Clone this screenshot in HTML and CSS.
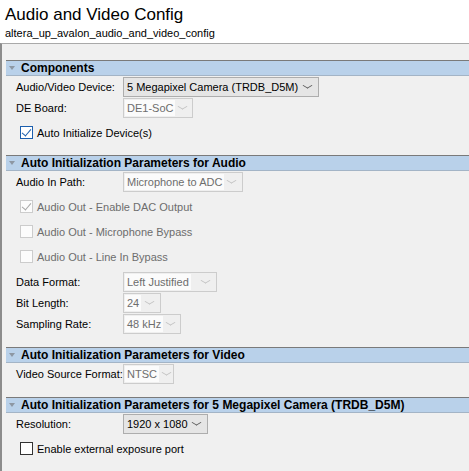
FILE: index.html
```html
<!DOCTYPE html>
<html lang="en">
<head>
  <meta charset="UTF-8">
  <title>Audio and Video Config</title>
  <link rel="stylesheet" href="styles.css">
</head>
<body>

<header class="top">
  <div class="title">Audio and Video Config</div>
  <div class="subtitle">altera_up_avalon_audio_and_video_config</div>
</header>

<main class="panel">

  <section class="group">
    <div class="group-head"><span class="tri"></span>Components</div>
    <div class="row">
      <label class="lbl">Audio/Video Device:</label>
      <div class="combo w-device"><span class="val">5 Megapixel Camera (TRDB_D5M)</span><span class="chev"></span></div>
    </div>
    <div class="row">
      <label class="lbl">DE Board:</label>
      <div class="combo off w-board"><span class="val">DE1-SoC</span><span class="chev"></span></div>
    </div>
    <div class="check-row">
      <span class="box checked focus"></span>Auto Initialize Device(s)
    </div>
  </section>

  <section class="group">
    <div class="group-head"><span class="tri"></span>Auto Initialization Parameters for Audio</div>
    <div class="row">
      <label class="lbl">Audio In Path:</label>
      <div class="combo off w-path"><span class="val">Microphone to ADC</span><span class="chev"></span></div>
    </div>
    <div class="check-row off">
      <span class="box checked"></span>Audio Out - Enable DAC Output
    </div>
    <div class="check-row off">
      <span class="box"></span>Audio Out - Microphone Bypass
    </div>
    <div class="check-row off">
      <span class="box"></span>Audio Out - Line In Bypass
    </div>
    <div class="row first">
      <label class="lbl">Data Format:</label>
      <div class="combo off w-format"><span class="val">Left Justified</span><span class="chev"></span></div>
    </div>
    <div class="row">
      <label class="lbl">Bit Length:</label>
      <div class="combo off w-bits"><span class="val">24</span><span class="chev"></span></div>
    </div>
    <div class="row">
      <label class="lbl">Sampling Rate:</label>
      <div class="combo off w-rate"><span class="val">48 kHz</span><span class="chev"></span></div>
    </div>
  </section>

  <section class="group">
    <div class="group-head"><span class="tri"></span>Auto Initialization Parameters for Video</div>
    <div class="row">
      <label class="lbl">Video Source Format:</label>
      <div class="combo off w-ntsc"><span class="val">NTSC</span><span class="chev"></span></div>
    </div>
  </section>

  <section class="group">
    <div class="group-head"><span class="tri"></span>Auto Initialization Parameters for 5 Megapixel Camera (TRDB_D5M)</div>
    <div class="row">
      <label class="lbl">Resolution:</label>
      <div class="combo w-res"><span class="val">1920 x 1080</span><span class="chev"></span></div>
    </div>
    <div class="check-row">
      <span class="box"></span>Enable external exposure port
    </div>
  </section>

</main>

</body>
</html>
```

FILE: styles.css
```css
:root {
  --panel-bg: #f0f0f0;
  --head-bg: #b9d1ea;
  --head-line: #7a7a7a;
  --text-main: #000;
  --text-off: #6d6d6d;
}

html, body {
  margin: 0;
  height: 100%;
}

body {
  font-family: 'Liberation Sans', Arial, sans-serif;
  font-size: 11px;
  color: var(--text-main);
  background-color: #fff;
  display: flex;
  flex-direction: column;
  overflow: hidden;
}

.top {
  height: 45px;
  box-sizing: border-box;
  padding: 4px 0 0 5px;
}

.title {
  font-size: 17px;
  line-height: 22px;
}

.subtitle {
  font-size: 11px;
  line-height: 14px;
}

.panel {
  flex: 1;
  background-color: var(--panel-bg);
  border-top: 1px solid #a9a9a9;
  border-left: 2px solid #8c8c8c;
  padding-top: 16px;
}

.group {
  padding-bottom: 13px;
}

.group-head {
  margin-left: 4px;
  height: 14px;
  line-height: 14px;
  background-color: var(--head-bg);
  border-top: 1px solid var(--head-line);
  border-bottom: 1px solid #a3b4c6;
  font-size: 12px;
  font-weight: bold;
  display: flex;
  align-items: center;
  white-space: nowrap;
}

.tri {
  width: 0;
  height: 0;
  margin: 0 6px 0 3px;
  border-left: 3.5px solid transparent;
  border-right: 3.5px solid transparent;
  border-top: 4px solid #8d97a3;
}

.row {
  height: 21px;
  display: flex;
  align-items: center;
  padding-left: 14px;
}

.row.first {
  margin-top: 2px;
}

.lbl {
  width: 107px;
  flex-shrink: 0;
}

.combo {
  height: 20px;
  box-sizing: border-box;
  border: 1px solid #adadad;
  background-color: #e5e5e5;
  display: flex;
  align-items: center;
  padding-left: 3px;
  white-space: nowrap;
}

.combo .val {
  flex: 1;
}

.chev {
  flex-shrink: 0;
  width: 7px;
  height: 7px;
  margin: 0 7px 3px 4px;
  box-sizing: border-box;
  border-right: 1px solid #5a5a5a;
  border-bottom: 1px solid #5a5a5a;
  transform: scale(1, 0.6) rotate(45deg);
}

.combo.off {
  border-color: #cccccc;
  background-color: #efefef;
  color: var(--text-off);
  padding-left: 1px;
}

.combo.off .val {
  flex: none;
  background-color: #fbfbfb;
  padding: 0 2px;
  line-height: 16px;
  margin-right: auto;
}

.combo.off .chev {
  border-color: #c2c2c2;
}

.w-device { width: 196px; }
.w-board { width: 70px; }
.w-path { width: 120px; }
.w-format { width: 94px; }
.w-bits { width: 38px; }
.w-rate { width: 58px; }
.w-ntsc { width: 51px; }
.w-res { width: 85px; }

.check-row {
  height: 25px;
  margin-top: 2px;
  display: flex;
  align-items: center;
  padding-left: 18px;
}

.check-row + .check-row {
  margin-top: 0;
}

.check-row:last-child {
  margin-bottom: -3px;
}

.check-row.off {
  color: var(--text-off);
}

.box {
  width: 13px;
  height: 13px;
  box-sizing: border-box;
  border: 1px solid #333;
  background-color: #fff;
  margin-right: 4px;
  position: relative;
}

.box.focus {
  border-color: #1c5fae;
}

.check-row.off .box {
  border-color: #cccccc;
  background-color: #fcfcfc;
}

.box.checked::after {
  content: "";
  position: absolute;
  left: 3px;
  top: 0;
  width: 4px;
  height: 8px;
  border-right: 1px solid #1c5fae;
  border-bottom: 1px solid #1c5fae;
  transform: rotate(40deg);
}

.check-row.off .box.checked::after {
  border-color: #a6a6a6;
}
```
